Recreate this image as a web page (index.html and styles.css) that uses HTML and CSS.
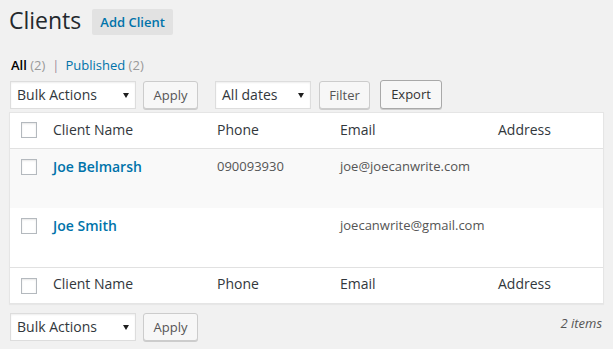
FILE: index.html
```html
<!DOCTYPE html>
<html lang="en">
<head>
<meta charset="utf-8">
<title>Clients</title>
<link rel="stylesheet" href="styles.css">
</head>
<body>
<div class="wrap">
  <div class="head">
    <h1 class="title">Clients</h1>
    <a class="title-action" href="#">Add Client</a>
  </div>

  <ul class="subsubsub">
    <li><a class="current" href="#">All <span class="count">(2)</span></a><span class="sep">|</span></li>
    <li><a href="#">Published <span class="count">(2)</span></a></li>
  </ul>

  <div class="tablenav top">
    <div class="select bulk"><span>Bulk Actions</span><i class="caret"></i></div>
    <button class="button apply">Apply</button>
    <div class="select dates"><span>All dates</span><i class="caret"></i></div>
    <button class="button filter">Filter</button>
    <button class="button export">Export</button>
  </div>

  <table class="list">
    <colgroup>
      <col class="c-check">
      <col class="c-name">
      <col class="c-phone">
      <col class="c-email">
      <col>
    </colgroup>
    <thead>
      <tr>
        <th class="check"><span class="cb"></span></th>
        <th>Client Name</th>
        <th>Phone</th>
        <th>Email</th>
        <th>Address</th>
      </tr>
    </thead>
    <tbody>
      <tr class="alt">
        <td class="check"><span class="cb"></span></td>
        <td class="name"><a href="#">Joe Belmarsh</a></td>
        <td>090093930</td>
        <td>joe@joecanwrite.com</td>
        <td></td>
      </tr>
      <tr>
        <td class="check"><span class="cb"></span></td>
        <td class="name"><a href="#">Joe Smith</a></td>
        <td></td>
        <td>joecanwrite@gmail.com</td>
        <td></td>
      </tr>
    </tbody>
    <tfoot>
      <tr>
        <th class="check"><span class="cb"></span></th>
        <th>Client Name</th>
        <th>Phone</th>
        <th>Email</th>
        <th>Address</th>
      </tr>
    </tfoot>
  </table>

  <div class="tablenav bottom">
    <div class="select bulk"><span>Bulk Actions</span><i class="caret"></i></div>
    <button class="button apply">Apply</button>
    <span class="num">2 items</span>
  </div>
</div>
</body>
</html>
```

FILE: styles.css
```css
body {
  margin: 0;
  background: #f1f1f1;
  font-family: "Open Sans", "Noto Sans", sans-serif;
  font-size: 13px;
  color: #444;
}

.wrap {
  padding: 6px 9px 0 9px;
}

.head {
  display: flex;
  align-items: flex-start;
}

.title {
  margin: 0;
  font-size: 23px;
  font-weight: 400;
  line-height: 29px;
  color: #23282d;
}

.title-action {
  margin: 3px 0 0 11px;
  padding: 4px 8px;
  white-space: nowrap;
  line-height: 18px;
  font-size: 13px;
  font-weight: 600;
  color: #0073aa;
  background: #e2e2e2;
  border-radius: 2px;
  text-decoration: none;
}

.subsubsub {
  list-style: none;
  margin: 17px 0 0;
  padding: 0 0 0 2px;
  display: flex;
  line-height: 26px;
  font-size: 13px;
  color: #666;
}

.subsubsub a {
  color: #0073aa;
  text-decoration: none;
}

.subsubsub a.current {
  color: #000;
  font-weight: 600;
}

.count {
  color: #999;
  font-weight: 400;
}

.sep {
  color: #a08c9c;
  margin: 0 6px 0 7px;
}

.tablenav {
  display: flex;
  align-items: flex-start;
  padding-left: 1px;
}

.tablenav.top {
  margin-top: 2px;
  height: 32px;
}

.tablenav.bottom {
  margin-top: 9px;
  height: 30px;
}

.select {
  position: relative;
  box-sizing: border-box;
  height: 28px;
  margin-top: 1px;
  border: 1px solid #ddd;
  background: #fff;
  box-shadow: inset 0 1px 2px rgba(0, 0, 0, 0.07);
  font-size: 14px;
  line-height: 26px;
  color: #32373c;
  padding-left: 6px;
}

.tablenav.bottom .select,
.tablenav.bottom .button {
  margin-top: 0;
}

.select.bulk {
  width: 126px;
  margin-right: 7px;
}

.select.dates {
  width: 96px;
  margin-right: 8px;
}

.caret {
  position: absolute;
  right: 6px;
  top: 11px;
  width: 0;
  height: 0;
  border-left: 3px solid transparent;
  border-right: 3px solid transparent;
  border-top: 5px solid #1e1e1e;
}

.button {
  box-sizing: border-box;
  height: 28px;
  margin-top: 1px;
  padding: 0 0 1px;
  border: 1px solid #ccc;
  border-radius: 3px;
  background: #f7f7f7;
  box-shadow: 0 1px 0 #ccc;
  color: #555;
  font: 13px/26px "Open Sans", "Noto Sans", sans-serif;
  text-align: center;
}

.button.apply {
  width: 55px;
  margin-right: 17px;
}

.button.filter {
  width: 51px;
  margin-right: 10px;
}

.button.export {
  width: 62px;
  height: 29px;
  margin-top: 0;
  border-color: #a9a9a9;
  color: #333;
  line-height: 27px;
}

.list {
  width: 100%;
  table-layout: fixed;
  border-collapse: separate;
  border-spacing: 0;
  background: #fff;
  border: 1px solid #e5e5e5;
  box-shadow: 0 1px 1px rgba(0, 0, 0, 0.04);
}

.c-check { width: 33px; }
.c-name { width: 164px; }
.c-phone { width: 123px; }
.c-email { width: 158px; }

.list th,
.list td {
  text-align: left;
  vertical-align: top;
  padding: 8px 10px 0;
}

.list th {
  font-size: 14px;
  font-weight: 400;
  line-height: 18px;
  color: #32373c;
}

.list thead th {
  padding-bottom: 9px;
  border-bottom: 1px solid #e1e1e1;
}

.list tfoot th {
  padding-top: 7px;
  padding-bottom: 10px;
  border-top: 1px solid #e1e1e1;
}

.list tbody tr {
  height: 59px;
}

.list tbody tr.alt {
  background: #f9f9f9;
}

.list td {
  font-size: 13px;
  line-height: 18px;
  color: #555;
}

.list td.name a {
  font-size: 14px;
  font-weight: 600;
  line-height: 20px;
  color: #0073aa;
  text-decoration: none;
}

.list th.check,
.list td.check {
  padding: 0;
}

.cb {
  display: block;
  box-sizing: border-box;
  width: 16px;
  height: 16px;
  margin-left: 11px;
  border: 1px solid #b4b9be;
  background: #fff;
  box-shadow: inset 0 1px 2px rgba(0, 0, 0, 0.1);
}

.list thead .cb { margin-top: 9px; }
.list tbody .cb { margin-top: 10px; }
.list tfoot .cb { margin-top: 10px; }

.num {
  margin-left: auto;
  margin-right: 2px;
  font-style: italic;
  font-size: 13px;
  line-height: 20px;
  color: #555;
}
```
